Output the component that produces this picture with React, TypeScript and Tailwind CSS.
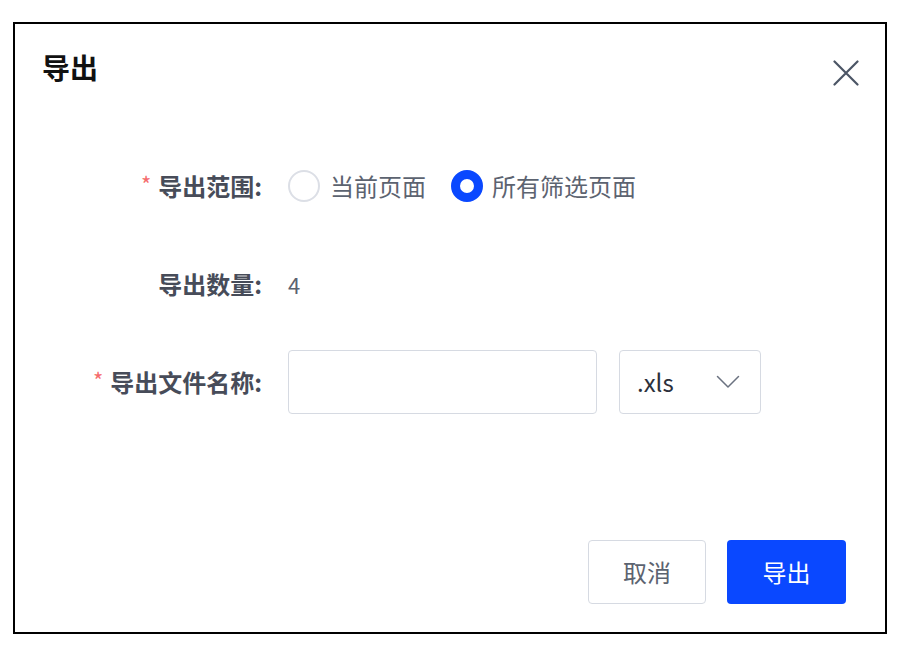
import React from "react";

export default function App() {
  const font = { fontFamily: '"Noto Sans CJK SC", "Noto Sans", sans-serif' };
  return (
    <div className="w-[918px] h-[654px] bg-white pt-[22px] pl-[13px]" style={font}>
      <div className="w-[874px] h-[612px] border-2 border-black bg-white flex flex-col">
        {/* Header */}
        <div className="flex justify-between items-start pl-[27px] pr-[26px] pt-[29px]">
          <div className="text-[28px] leading-[28px] font-bold text-[#111]">导出</div>
          <svg width="26" height="26" viewBox="0 0 26 26" className="mt-[7px]">
            <path d="M1.5 1.5 L24.5 24.5 M24.5 1.5 L1.5 24.5" stroke="#4b5565" strokeWidth="2.2" strokeLinecap="round" />
          </svg>
        </div>

        {/* Form */}
        <div className="flex flex-col gap-[34px] mt-[68px]">
          <div className="flex items-center h-[64px]">
            <div className="w-[247px] flex justify-end items-center">
              <span className="text-[#f56c6c] text-[22px] leading-none mr-[7px] -mt-[6px]">*</span>
              <span className="text-[24px] leading-[24px] font-bold text-[#474c59]">导出范围:</span>
            </div>
            <div className="ml-[26px] flex items-center">
              <span className="w-[32px] h-[32px] rounded-full border-2 border-[#dcdfe6] bg-white" />
              <span className="ml-[10px] text-[24px] leading-[24px] text-[#5c6370]">当前页面</span>
              <span className="ml-[25px] w-[32px] h-[32px] rounded-full border-[9px] border-[#0a48ff] bg-white" />
              <span className="ml-[9px] text-[24px] leading-[24px] text-[#5c6370]">所有筛选页面</span>
            </div>
          </div>

          <div className="flex items-center h-[64px]">
            <div className="w-[247px] flex justify-end items-center">
              <span className="text-[24px] leading-[24px] font-bold text-[#474c59]">导出数量:</span>
            </div>
            <div className="ml-[26px] text-[22px] leading-[24px] text-[#5c6370]">4</div>
          </div>

          <div className="flex items-center h-[64px]">
            <div className="w-[247px] flex justify-end items-center">
              <span className="text-[#f56c6c] text-[22px] leading-none mr-[7px] -mt-[6px]">*</span>
              <span className="text-[24px] leading-[24px] font-bold text-[#474c59]">导出文件名称:</span>
            </div>
            <div className="ml-[26px] flex items-center gap-[22px]">
              <div className="w-[309px] h-[64px] border border-[#d6dae2] rounded-[4px] bg-white" />
              <div className="w-[142px] h-[64px] border border-[#d6dae2] rounded-[4px] bg-white flex items-center justify-between pl-[17px] pr-[20px]">
                <span className="text-[24px] leading-[24px] text-[#2b303b]">.xls</span>
                <svg width="24" height="14" viewBox="0 0 24 14">
                  <path d="M1.5 1.5 L12 12 L22.5 1.5" fill="none" stroke="#6b7280" strokeWidth="1.5" strokeLinecap="round" strokeLinejoin="round" />
                </svg>
              </div>
            </div>
          </div>
        </div>

        {/* Footer */}
        <div className="flex justify-end gap-[21px] mt-[126px] pr-[39px]">
          <button className="w-[118px] h-[64px] border border-[#d6dae2] rounded-[4px] bg-white text-[24px] text-[#5c6370]">取消</button>
          <button className="w-[119px] h-[64px] rounded-[4px] bg-[#0a48ff] text-[24px] text-white">导出</button>
        </div>
      </div>
    </div>
  );
}
